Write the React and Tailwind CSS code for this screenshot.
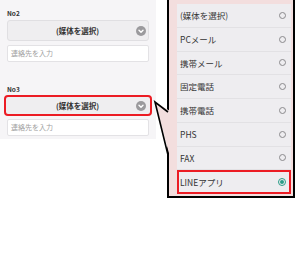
import React from 'react';

const OPTIONS = ['(媒体を選択)', 'PCメール', '携帯メール', '固定電話', '携帯電話', 'PHS', 'FAX', 'LINEアプリ'];

const jp = { fontFamily: '"Noto Sans CJK JP", "Noto Sans", sans-serif' };

const ChevronCircle = () => (
  <svg width="10" height="10" viewBox="0 0 10 10" className="shrink-0">
    <circle cx="5" cy="5" r="5" fill="#9b9a9d" />
    <path d="M3 4.2 L5 6.2 L7 4.2" fill="none" stroke="#fff" strokeWidth="1.4" strokeLinecap="round" strokeLinejoin="round" />
  </svg>
);

const MediaSelect = ({ highlighted }) => (
  <div
    className={
      highlighted
        ? 'mt-[2px] -mx-[3px] h-[21px] flex items-center rounded-[4px] border-2 border-[#ec1c24] bg-[#efeef0] pl-[5px] pr-[4px]'
        : 'mt-[3px] h-[21px] flex items-center rounded-[3px] border border-[#e0dfe2] bg-[#efeef0] pl-[3px] pr-[2px]'
    }
  >
    <span className="flex-1 text-center text-[7.5px] font-bold text-[#333] pl-[8px]">(媒体を選択)</span>
    <ChevronCircle />
  </div>
);

const ContactInput = ({ top }) => (
  <div className={`${top} h-[17px] flex items-center rounded-[2px] border border-[#e3e2e5] bg-white px-[3px]`}>
    <span className="text-[7px] text-[#a0a0a0]">連絡先を入力</span>
  </div>
);

const App = () => {
  return (
    <div className="relative w-[300px] h-[275px] overflow-hidden bg-white" style={jp}>
      <div className="w-[156px] bg-[#f6f5f7] px-[7px] pt-[9px] pb-[3px]">
        <div className="h-[8px] text-[6.5px] leading-[8px] font-bold text-[#333]">No2</div>
        <MediaSelect />
        <ContactInput top="mt-[4px]" />
        <div className="mt-[23px] h-[8px] text-[6.5px] leading-[8px] font-bold text-[#333]">No3</div>
        <MediaSelect highlighted />
        <ContactInput top="mt-[3px]" />
      </div>

      <div className="absolute left-[167px] top-[-4px] w-[128px] h-[202px] border-2 border-black bg-[#f3dede] pl-[8px] pr-[2px] pt-[6px]">
        <div className="flex flex-col bg-[#eeedf0]">
          {OPTIONS.map((label, i) => {
            const selected = i === OPTIONS.length - 1;
            return (
              <div
                key={label}
                className={
                  selected
                    ? 'h-[23.75px] flex items-center justify-between border-2 border-[#ec1c24] pl-[1px] pr-[3px]'
                    : 'h-[23.75px] flex items-center justify-between border-b border-[#e2e1e4] pl-[3px] pr-[5px]'
                }
              >
                <span className="text-[8.5px] text-[#333]">{label}</span>
                {selected ? (
                  <span className="w-[8px] h-[8px] rounded-full border border-[#2a9d88] flex items-center justify-center">
                    <span className="w-[4px] h-[4px] rounded-full bg-[#2a9d88]" />
                  </span>
                ) : (
                  <span className="w-[7px] h-[7px] rounded-full border border-[#8a898c]" />
                )}
              </div>
            );
          })}
        </div>
      </div>

      <svg className="absolute left-[153px] top-[100px]" width="18" height="60" viewBox="0 0 18 60">
        <polygon points="17,11 2,2 17,57" fill="#f3dede" />
        <polyline points="15,12 2,2 15,55" fill="none" stroke="#000" strokeWidth="1.6" strokeLinejoin="miter" />
      </svg>
    </div>
  );
};

export default App;
